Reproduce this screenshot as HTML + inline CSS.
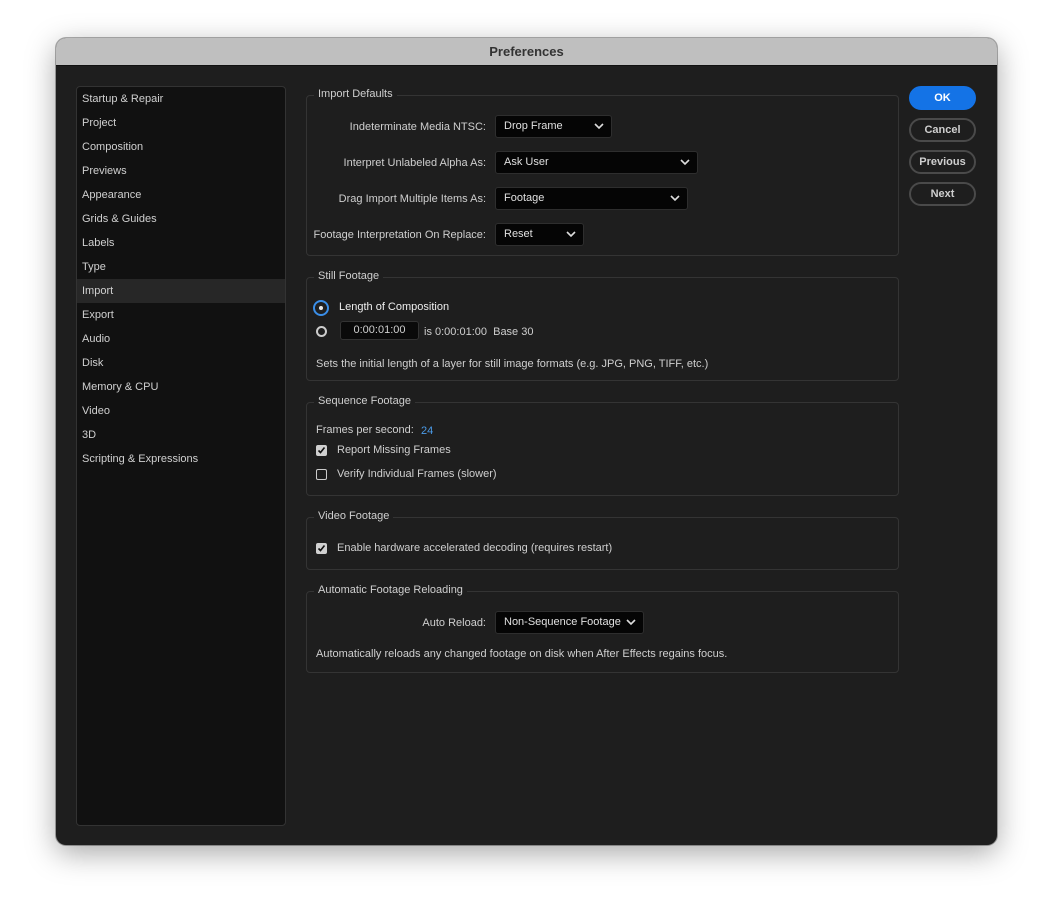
<!DOCTYPE html>
<html><head><meta charset="utf-8"><style>
*{box-sizing:border-box;margin:0;padding:0}
body{width:1053px;height:920px;background:#fff;font-family:"Liberation Sans",sans-serif;font-size:11px;color:#cfcfcf;position:relative;overflow:hidden}
.win{position:absolute;left:56px;top:38px;width:941px;height:807px;background:#1e1e1e;border-radius:10px;overflow:hidden;box-shadow:0 8px 30px rgba(0,0,0,.35),0 0 0 1px rgba(0,0,0,.3)}
.title{position:absolute;left:0;top:0;width:100%;height:28px;background:#bfbfbf;border-bottom:1px solid #111;text-align:center;line-height:27px;font-weight:bold;font-size:13px;color:#333}
.a{position:absolute;white-space:nowrap}
.side{position:absolute;left:20px;top:48px;width:210px;height:740px;background:#111;border:1px solid #333;border-radius:4px}
.side div{height:24px;line-height:24px;padding-left:5px;color:#d0d0d0}
.side .sel{background:#272727}
.grp{position:absolute;left:250px;width:593px;border:1px solid #343434;border-radius:4px}
.lg{position:absolute;background:#1e1e1e;padding:0 4px;left:7px;top:-8px;color:#cfcfcf}
.dd{position:absolute;height:23px;background:#050505;border:1px solid #2e2e2e;border-radius:3px;line-height:21px;padding-left:8px;color:#e0e0e0}
.dd svg{position:absolute;right:7px;top:7px}
.lbl{position:absolute;text-align:right;white-space:nowrap}
.btn{position:absolute;left:853px;width:67px;height:24px;border-radius:12px;border:2px solid #4a4a4a;text-align:center;line-height:20px;font-weight:bold;color:#cfcfcf}
.cb{position:absolute;width:11px;height:11px;border-radius:2px}
</style></head><body>
<div class="win">
<div class="title">Preferences</div>
<div class="side">
<div>Startup &amp; Repair</div><div>Project</div><div>Composition</div><div>Previews</div><div>Appearance</div><div>Grids &amp; Guides</div><div>Labels</div><div>Type</div><div class="sel">Import</div><div>Export</div><div>Audio</div><div>Disk</div><div>Memory &amp; CPU</div><div>Video</div><div>3D</div><div>Scripting &amp; Expressions</div>
</div>

<div class="grp" style="top:57px;height:161px"><span class="lg">Import Defaults</span></div>
<div class="lbl" style="right:511px;top:83px">Indeterminate Media NTSC:</div>
<div class="lbl" style="right:511px;top:119px">Interpret Unlabeled Alpha As:</div>
<div class="lbl" style="right:511px;top:155px">Drag Import Multiple Items As:</div>
<div class="lbl" style="right:511px;top:191px">Footage Interpretation On Replace:</div>
<div class="dd" style="left:439px;top:77px;width:117px">Drop Frame<svg width="10" height="7"><path d="M1 1l4 4 4-4" stroke="#ddd" stroke-width="1.6" fill="none"/></svg></div>
<div class="dd" style="left:439px;top:113px;width:203px">Ask User<svg width="10" height="7"><path d="M1 1l4 4 4-4" stroke="#ddd" stroke-width="1.6" fill="none"/></svg></div>
<div class="dd" style="left:439px;top:149px;width:193px">Footage<svg width="10" height="7"><path d="M1 1l4 4 4-4" stroke="#ddd" stroke-width="1.6" fill="none"/></svg></div>
<div class="dd" style="left:439px;top:185px;width:89px">Reset<svg width="10" height="7"><path d="M1 1l4 4 4-4" stroke="#ddd" stroke-width="1.6" fill="none"/></svg></div>

<div class="grp" style="top:239px;height:104px"><span class="lg">Still Footage</span></div>
<div class="a" style="left:257px;top:262px;width:16px;height:16px;border-radius:50%;border:2px solid #3a8ee8;background:#1e1e1e"><div style="position:absolute;left:2px;top:2px;width:8px;height:8px;border-radius:50%;background:#e8e8e8;border:2px solid #222"></div></div>
<div class="a" style="left:283px;top:263px;color:#eee">Length of Composition</div>
<div class="a" style="left:260px;top:288px;width:11px;height:11px;border-radius:50%;border:2px solid #ccc"></div>
<div class="a" style="left:284px;top:283px;width:79px;height:19px;background:#0a0a0a;border:1px solid #333;border-radius:3px;text-align:center;line-height:17px">0:00:01:00</div>
<div class="a" style="left:368px;top:288px">is 0:00:01:00&nbsp; Base 30</div>
<div class="a" style="left:260px;top:320px">Sets the initial length of a layer for still image formats (e.g. JPG, PNG, TIFF, etc.)</div>

<div class="grp" style="top:364px;height:94px"><span class="lg">Sequence Footage</span></div>
<div class="a" style="left:260px;top:386px">Frames per second:</div>
<div class="a" style="left:365px;top:387px;color:#4b9be8">24</div>
<div class="cb" style="left:260px;top:407px;background:#d0d0d0"><svg width="11" height="11" style="position:absolute;left:0;top:0"><path d="M2.5 5.5l2 2 4-5" stroke="#111" stroke-width="1.6" fill="none"/></svg></div>
<div class="a" style="left:281px;top:406px">Report Missing Frames</div>
<div class="cb" style="left:260px;top:431px;border:1.5px solid #ccc"></div>
<div class="a" style="left:281px;top:430px">Verify Individual Frames (slower)</div>

<div class="grp" style="top:479px;height:53px"><span class="lg">Video Footage</span></div>
<div class="cb" style="left:260px;top:505px;background:#d0d0d0"><svg width="11" height="11" style="position:absolute;left:0;top:0"><path d="M2.5 5.5l2 2 4-5" stroke="#111" stroke-width="1.6" fill="none"/></svg></div>
<div class="a" style="left:281px;top:504px">Enable hardware accelerated decoding (requires restart)</div>

<div class="grp" style="top:553px;height:82px"><span class="lg">Automatic Footage Reloading</span></div>
<div class="lbl" style="right:511px;top:579px">Auto Reload:</div>
<div class="dd" style="left:439px;top:573px;width:149px">Non-Sequence Footage<svg width="10" height="7"><path d="M1 1l4 4 4-4" stroke="#ddd" stroke-width="1.6" fill="none"/></svg></div>
<div class="a" style="left:260px;top:610px">Automatically reloads any changed footage on disk when After Effects regains focus.</div>

<div class="btn" style="top:48px;background:#1473e6;border-color:#1473e6;color:#fff">OK</div>
<div class="btn" style="top:80px">Cancel</div>
<div class="btn" style="top:112px">Previous</div>
<div class="btn" style="top:144px">Next</div>
</div>
</body></html>
